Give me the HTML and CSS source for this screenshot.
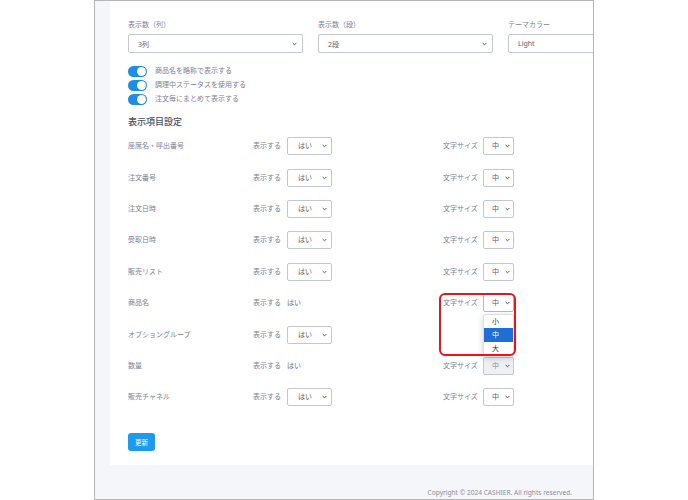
FILE: index.html
```html
<!DOCTYPE html>
<html lang="ja">
<head>
<meta charset="utf-8">
<link rel="stylesheet" href="styles.css">
</head>
<body>
<div class="frame">
  <div class="card">
    <div class="top-grid">
      <div class="field">
        <div class="label">表示数（列）</div>
        <div class="select wide"><span>3列</span><svg class="chev" viewBox="0 0 6 4"><path d="M0.8 0.8 L3 3 L5.2 0.8" /></svg></div>
      </div>
      <div class="field">
        <div class="label">表示数（段）</div>
        <div class="select wide"><span>2段</span><svg class="chev" viewBox="0 0 6 4"><path d="M0.8 0.8 L3 3 L5.2 0.8" /></svg></div>
      </div>
      <div class="field">
        <div class="label">テーマカラー</div>
        <div class="select wide"><span>Light</span></div>
      </div>
    </div>
    <div class="toggles">
      <div class="toggle-row"><span class="toggle"><span class="knob"></span></span><span class="tlabel">商品名を略称で表示する</span></div>
      <div class="toggle-row"><span class="toggle"><span class="knob"></span></span><span class="tlabel">調理中ステータスを使用する</span></div>
      <div class="toggle-row"><span class="toggle"><span class="knob"></span></span><span class="tlabel">注文毎にまとめて表示する</span></div>
    </div>
    <h2 class="heading">表示項目設定</h2>
    <div class="rows">
      <div class="row"><span class="rlabel">座席名・呼出番号</span><span class="show">表示する</span><span class="cell"><span class="select yes"><span>はい</span><svg class="chev" viewBox="0 0 6 4"><path d="M0.8 0.8 L3 3 L5.2 0.8" /></svg></span></span><span class="show">文字サイズ</span><span class="select size"><span>中</span><svg class="chev" viewBox="0 0 6 4"><path d="M0.8 0.8 L3 3 L5.2 0.8" /></svg></span></div>
      <div class="row"><span class="rlabel">注文番号</span><span class="show">表示する</span><span class="cell"><span class="select yes"><span>はい</span><svg class="chev" viewBox="0 0 6 4"><path d="M0.8 0.8 L3 3 L5.2 0.8" /></svg></span></span><span class="show">文字サイズ</span><span class="select size"><span>中</span><svg class="chev" viewBox="0 0 6 4"><path d="M0.8 0.8 L3 3 L5.2 0.8" /></svg></span></div>
      <div class="row"><span class="rlabel">注文日時</span><span class="show">表示する</span><span class="cell"><span class="select yes"><span>はい</span><svg class="chev" viewBox="0 0 6 4"><path d="M0.8 0.8 L3 3 L5.2 0.8" /></svg></span></span><span class="show">文字サイズ</span><span class="select size"><span>中</span><svg class="chev" viewBox="0 0 6 4"><path d="M0.8 0.8 L3 3 L5.2 0.8" /></svg></span></div>
      <div class="row"><span class="rlabel">受取日時</span><span class="show">表示する</span><span class="cell"><span class="select yes"><span>はい</span><svg class="chev" viewBox="0 0 6 4"><path d="M0.8 0.8 L3 3 L5.2 0.8" /></svg></span></span><span class="show">文字サイズ</span><span class="select size"><span>中</span><svg class="chev" viewBox="0 0 6 4"><path d="M0.8 0.8 L3 3 L5.2 0.8" /></svg></span></div>
      <div class="row"><span class="rlabel">販売リスト</span><span class="show">表示する</span><span class="cell"><span class="select yes"><span>はい</span><svg class="chev" viewBox="0 0 6 4"><path d="M0.8 0.8 L3 3 L5.2 0.8" /></svg></span></span><span class="show">文字サイズ</span><span class="select size"><span>中</span><svg class="chev" viewBox="0 0 6 4"><path d="M0.8 0.8 L3 3 L5.2 0.8" /></svg></span></div>
      <div class="row"><span class="rlabel">商品名</span><span class="show">表示する</span><span class="cell"><span class="plain">はい</span></span><span class="show">文字サイズ</span>
        <span class="size-wrap">
          <span class="select size focus"><span>中</span><svg class="chev" viewBox="0 0 6 4"><path d="M0.8 0.8 L3 3 L5.2 0.8" /></svg></span>
          <span class="menu"><span class="opt">小</span><span class="opt sel">中</span><span class="opt">大</span></span>
          <span class="highlight"></span>
        </span>
      </div>
      <div class="row"><span class="rlabel">オプショングループ</span><span class="show">表示する</span><span class="cell"><span class="select yes"><span>はい</span><svg class="chev" viewBox="0 0 6 4"><path d="M0.8 0.8 L3 3 L5.2 0.8" /></svg></span></span><span class="show"></span><span></span></div>
      <div class="row"><span class="rlabel">数量</span><span class="show">表示する</span><span class="cell"><span class="plain">はい</span></span><span class="show">文字サイズ</span><span class="select size disabled"><span>中</span><svg class="chev" viewBox="0 0 6 4"><path d="M0.8 0.8 L3 3 L5.2 0.8" /></svg></span></div>
      <div class="row"><span class="rlabel">販売チャネル</span><span class="show">表示する</span><span class="cell"><span class="select yes"><span>はい</span><svg class="chev" viewBox="0 0 6 4"><path d="M0.8 0.8 L3 3 L5.2 0.8" /></svg></span></span><span class="show">文字サイズ</span><span class="select size"><span>中</span><svg class="chev" viewBox="0 0 6 4"><path d="M0.8 0.8 L3 3 L5.2 0.8" /></svg></span></div>
    </div>
    <button class="btn">更新</button>
  </div>
  <div class="footer">Copyright © 2024 CASHIER. All rights reserved.</div>
</div>
</body>
</html>
```
FILE: styles.css
```css
* { box-sizing: border-box; }
html, body { margin: 0; padding: 0; background: #ffffff; }
body {
  font-family: "Noto Sans", "Noto Sans CJK JP", sans-serif;
  color: #7d8293;
  width: 688px;
  height: 500px;
  overflow: hidden;
}
.frame {
  margin-left: 94px;
  width: 500px;
  height: 500px;
  border: 1px solid #b5b5b8;
  background: #f5f6fa;
  overflow: hidden;
  padding-left: 15px;
  display: flex;
  flex-direction: column;
}
.card {
  background: #ffffff;
  width: 520px;
  height: 464px;
  flex: none;
  padding: 19px 0 0 18px;
  display: flex;
  flex-direction: column;
  align-items: flex-start;
}
.top-grid {
  display: grid;
  grid-template-columns: 175px 175px 175px;
  column-gap: 15px;
}
.label {
  font-size: 7px;
  line-height: 10px;
  height: 10px;
  margin-bottom: 4px;
  color: #7d8293;
}
.select {
  display: flex;
  align-items: center;
  justify-content: space-between;
  border: 1px solid #c3c6d6;
  border-radius: 2px;
  background: #fff;
  color: #5a5e6c;
  font-size: 7px;
}
.select.wide {
  height: 19px;
  padding: 0 5px 0 9px;
}
.chev {
  width: 5px;
  height: 4px;
  fill: none;
  stroke: #4a4e5a;
  stroke-width: 1.1;
  flex: none;
}
.toggles {
  margin-top: 11px;
  display: flex;
  flex-direction: column;
}
.toggle-row {
  height: 14px;
  display: flex;
  align-items: center;
}
.toggle {
  width: 19px;
  height: 11px;
  border-radius: 6px;
  background: #1b8fe6;
  display: flex;
  align-items: center;
  justify-content: flex-end;
  padding-right: 1px;
}
.knob {
  width: 9px;
  height: 9px;
  border-radius: 50%;
  background: #fff;
  box-shadow: 0 0 1px rgba(0,0,0,0.3);
}
.tlabel {
  margin-left: 8px;
  font-size: 7px;
  line-height: 10px;
}
.heading {
  margin: 10px 0 0 0;
  font-size: 9px;
  line-height: 12px;
  font-weight: 500;
  color: #4b5060;
}
.rows {
  margin-top: 2.5px;
  display: flex;
  flex-direction: column;
}
.row {
  height: 31.4px;
  display: grid;
  grid-template-columns: 125px 34px 156px 40px 31px;
  align-items: center;
  font-size: 7px;
  line-height: 10px;
}
.rlabel, .show { color: #7d8293; }
.select.yes {
  width: 45px;
  height: 18px;
  padding: 0 4px 0 10px;
}
.select.size {
  width: 31px;
  height: 18px;
  padding: 0 3px 0 8px;
}
.select.focus { border-color: #8ec3f0; }
.select.disabled { background: #eef0f4; color: #8a8e9a; }
.plain { color: #6d7180; }
.size-wrap {
  position: relative;
  width: 31px;
  height: 18px;
}
.menu {
  position: absolute;
  top: 20px;
  left: 0;
  width: 31px;
  height: 42px;
  background: #fff;
  border: 1px solid #dcdee5;
  border-radius: 3px;
  box-shadow: 0 2px 6px rgba(0,0,0,0.18);
  display: flex;
  flex-direction: column;
  overflow: hidden;
  z-index: 2;
}
.opt {
  height: 13.3px;
  line-height: 13.3px;
  padding-left: 8px;
  font-size: 7px;
  color: #333;
  flex: none;
}
.opt.sel { background: #1e6ed6; color: #fff; }
.highlight {
  position: absolute;
  left: -44px;
  top: -1px;
  width: 77px;
  height: 63px;
  border: 2px solid #e9151c;
  border-radius: 6px;
  z-index: 3;
  pointer-events: none;
}
.btn {
  margin-top: 20px;
  width: 27px;
  height: 18px;
  background: #1b9af0;
  color: #fff;
  border: none;
  border-radius: 3px;
  font-family: "Noto Sans CJK JP", sans-serif;
  font-size: 6.5px;
  padding: 0;
}
.footer {
  flex: 1;
  display: flex;
  align-items: flex-end;
  justify-content: flex-end;
  padding: 0 21px 1px 0;
  font-size: 6.6px;
  line-height: 10px;
  color: #8a8e9a;
}
```
